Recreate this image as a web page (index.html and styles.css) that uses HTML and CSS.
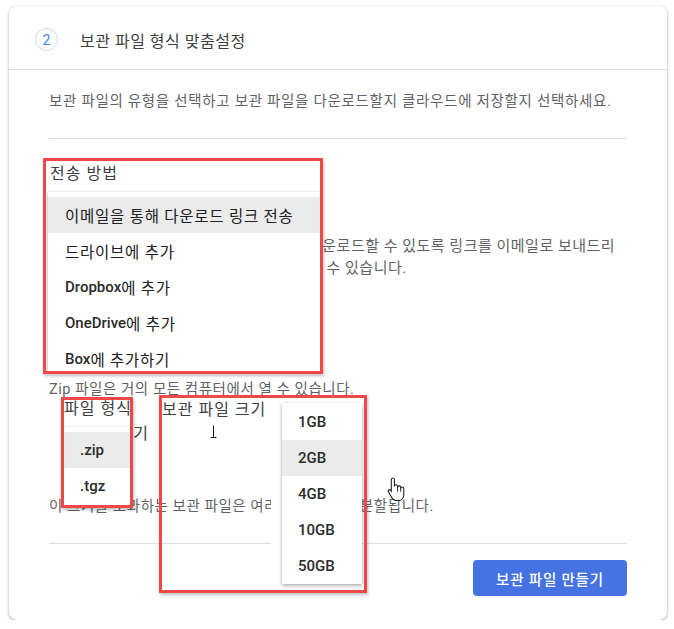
FILE: index.html
```html
<!DOCTYPE html>
<html lang="ko">
<head>
  <meta charset="UTF-8">
  <title>보관 파일 형식 맞춤설정</title>
  <link rel="stylesheet" href="styles.css">
</head>
<body>

  <div class="card">
    <div class="card-head">
      <div class="step">2</div>
      <div class="titulo">보관 파일 형식 맞춤설정</div>
    </div>

    <div class="card-body">
      <p class="desc">보관 파일의 유형을 선택하고 보관 파일을 다운로드할지 클라우드에 저장할지 선택하세요.</p>
      <hr class="rule">

      <div class="campo-label first">전송 방법</div>
      <div class="select-space s1"></div>
      <p class="nota shift">다운로드할 수 있도록 링크를 이메일로 보내드리<br>할 수 있습니다.</p>

      <div class="campo-label mid">파일 형식</div>
      <div class="select-space s2"></div>
      <p class="nota">Zip 파일은 거의 모든 컴퓨터에서 열 수 있습니다.</p>

      <div class="campo-label size">파일 크기</div>
      <div class="select-space s3"></div>
      <p class="nota">이 크기를 초과하는 보관 파일은 여러 개의 파일로 분할됩니다.</p>

      <hr class="rule bottom">
      <div class="acciones">
        <button class="btn">보관 파일 만들기</button>
      </div>
    </div>

    <!-- recuadros marcados encima de la pagina -->
    <div class="marca marca-envio">
      <div class="marca-label">전송 방법</div>
      <div class="menu menu-envio">
        <div class="menu-item hl">이메일을 통해 다운로드 링크 전송</div>
        <div class="menu-item">드라이브에 추가</div>
        <div class="menu-item"><span class="en">Dropbox</span>에 추가</div>
        <div class="menu-item"><span class="en">OneDrive</span>에 추가</div>
        <div class="menu-item"><span class="en">Box</span>에 추가하기</div>
      </div>
    </div>

    <div class="marca marca-tipo">
      <div class="marca-label tight">파일 형식</div>
      <div class="menu menu-tipo">
        <div class="menu-item hl"><span class="en">.zip</span></div>
        <div class="menu-item"><span class="en">.tgz</span></div>
      </div>
    </div>

    <div class="marca marca-size">
      <div class="marca-label">보관 파일 크기</div>
      <div class="size-wrap">
        <div class="menu menu-size">
          <div class="menu-item"><span class="en">1GB</span></div>
          <div class="menu-item hl"><span class="en">2GB</span></div>
          <div class="menu-item"><span class="en">4GB</span></div>
          <div class="menu-item"><span class="en">10GB</span></div>
          <div class="menu-item"><span class="en">50GB</span></div>
        </div>
      </div>
      <svg class="ibeam" width="7" height="13" viewBox="0 0 7 13">
        <path d="M3.5 0.5V12M0.5 12.5H6.5" stroke="#111" stroke-width="1" fill="none"/>
      </svg>
    </div>

    <svg class="mano" width="19" height="25" viewBox="0 0 18 24">
      <path d="M5.5 1a1.5 1.5 0 0 1 1.5 1.5V9a1.5 1.5 0 0 1 3 0V10a1.5 1.5 0 0 1 3 0V11a1.5 1.5 0 0 1 3 0V17c0 3-2 5.5-4.5 5.5H8.5c-2 0-3.2-1-4.3-3L1.3 14.3a1.3 1.3 0 0 1 2.1-1.6L4 13.6V2.5A1.5 1.5 0 0 1 5.5 1Z" fill="#fff" stroke="#1a1a1a" stroke-width="1"/>
      <path d="M10 9.5V14M13 10.5V14" stroke="#1a1a1a" stroke-width="0.9" fill="none"/>
    </svg>
  </div>

</body>
</html>
```

FILE: styles.css
```css
body {
  margin: 0;
  padding: 6px 7px 0 9px;
  font-family: Roboto, "Noto Sans CJK KR", sans-serif;
  background-color: #fff;
}

.card {
  position: relative;
  background-color: #fff;
  border-radius: 8px;
  box-shadow: 0 1px 2px rgba(60, 64, 67, 0.3), 0 1px 3px 1px rgba(60, 64, 67, 0.15);
}

.card-head {
  display: flex;
  align-items: center;
  box-sizing: border-box;
  height: 64px;
  padding: 4px 0 0 26px;
  border-bottom: 1px solid #dadce0;
}

.step {
  width: 23px;
  height: 23px;
  box-sizing: border-box;
  border: 1px solid #c8d9f8;
  border-radius: 50%;
  display: flex;
  align-items: center;
  justify-content: center;
  color: #4285f4;
  font-size: 14px;
}

.titulo {
  margin-left: 22px;
  font-size: 16px;
  letter-spacing: 0.5px;
  color: #3c4043;
}

.card-body {
  padding: 0 40px 24px;
}

.desc {
  margin: 22px 0 0;
  font-size: 14.5px;
  letter-spacing: 0.7px;
  line-height: 20px;
  color: #5f6368;
}

.rule {
  border: 0;
  border-top: 1px solid #dadce0;
  margin: 26px 0 0;
}

.rule.bottom {
  margin-top: 26px;
}

.campo-label {
  font-size: 16px;
  letter-spacing: 1px;
  line-height: 20px;
  color: #3c4043;
}

.campo-label.first { margin-top: 25px; }
.campo-label.mid { margin-top: 18px; }
.campo-label.size {
  margin-top: 24px;
  padding-left: 32px;
}

.select-space.s1 { height: 51px; }
.select-space.s2 { height: 63px; }
.select-space.s3 { height: 53px; }

.nota {
  margin: 0;
  font-size: 14.5px;
  letter-spacing: 0.55px;
  line-height: 20px;
  color: #5f6368;
  white-space: nowrap;
}

.nota.shift {
  padding-left: 259px;
  font-size: 15px;
  letter-spacing: 0.5px;
  line-height: 22px;
}

.acciones {
  display: flex;
  justify-content: flex-end;
  margin-top: 16px;
}

.btn {
  width: 154px;
  height: 36px;
  border: none;
  border-radius: 4px;
  background-color: #4673e3;
  color: #fff;
  font-family: Roboto, "Noto Sans CJK KR", sans-serif;
  font-size: 14.5px;
  font-weight: 500;
  letter-spacing: 0.8px;
  cursor: pointer;
}

/* recuadros rojos */
.marca {
  position: absolute;
  box-sizing: border-box;
  border: 3px solid #f04848;
  box-shadow: 1px 2px 3px rgba(0, 0, 0, 0.25);
  overflow: hidden;
}

.marca-envio {
  left: 34px;
  top: 152px;
  width: 280px;
  height: 216px;
  background-color: #fff;
}

.marca-tipo {
  left: 52px;
  top: 391px;
  width: 72px;
  height: 111px;
  background-color: #fff;
}

.marca-size {
  left: 150px;
  top: 389px;
  width: 208px;
  height: 198px;
  display: flex;
  align-items: flex-start;
}

.marca-label {
  padding: 3px 0 0 4px;
  font-size: 16px;
  letter-spacing: 1px;
  line-height: 20px;
  color: #3c4043;
  background-color: #fff;
  white-space: nowrap;
}

.marca-label.tight {
  padding: 0;
  line-height: 18px;
}

.marca-size .marca-label {
  padding: 2px 0 0 0;
}

.menu {
  background-color: #fff;
  box-shadow: 0 2px 4px rgba(0, 0, 0, 0.28), 0 0 2px rgba(0, 0, 0, 0.12);
}

.menu-envio {
  margin: 8px 0 0 2px;
  padding-top: 5px;
}

.menu-tipo {
  margin-top: 9px;
  padding: 5px 0 2px;
}

.size-wrap {
  margin: 5px 2px 0 auto;
  padding: 0 0 12px 11px;
  background-color: #fff;
}

.menu-size {
  width: 80px;
  padding-top: 1px;
}

.menu-item {
  display: flex;
  align-items: center;
  height: 36px;
  padding-left: 17px;
  font-size: 15.5px;
  letter-spacing: 0.75px;
  color: #202124;
  white-space: nowrap;
}

.menu-tipo .menu-item,
.menu-size .menu-item {
  padding-left: 16px;
}

.menu-item.hl {
  background-color: #ebebeb;
}

.en {
  font-size: 15px;
  font-weight: 500;
  letter-spacing: 0;
  color: #2b2b2b;
}

.ibeam {
  position: absolute;
  left: 48px;
  top: 27px;
}

.mano {
  position: absolute;
  left: 378px;
  top: 471px;
}
```
